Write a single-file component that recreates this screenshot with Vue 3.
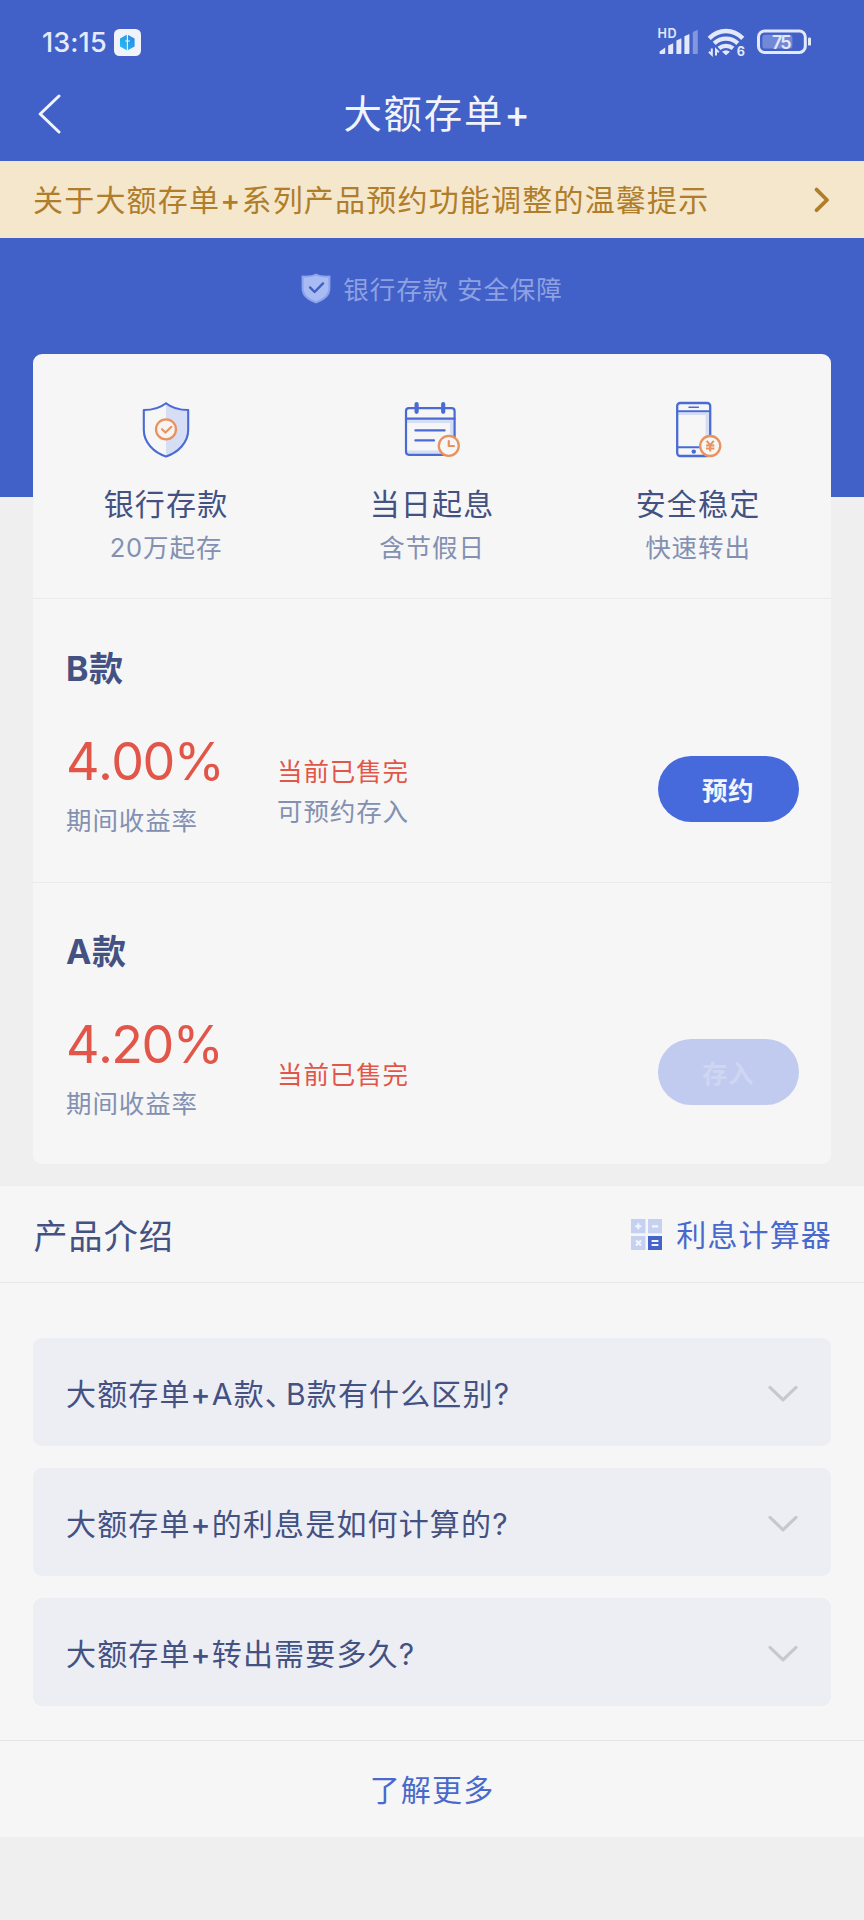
<script setup>
const products = [
  { name: 'B款', rate: '4.00%', status: '当前已售完', note: '可预约存入', action: '预约', disabled: false },
  { name: 'A款', rate: '4.20%', status: '当前已售完', note: '', action: '存入', disabled: true },
]

const questions = [
  '大额存单+A款、B款有什么区别?',
  '大额存单+的利息是如何计算的?',
  '大额存单+转出需要多久?',
]

// Splits out the marks that need their own weight or width.
const parts = (text) => text.split(/([+、])/)
const markClass = (part) => ({ plus: part === '+', comma: part === '、' })
</script>

<template>
  <div class="page">
    <header class="header">
      <div class="status">
        <span class="time">13:15</span>
        <svg class="app-icon" viewBox="0 0 27 27">
          <defs>
            <linearGradient id="hex" x1="1" y1="0" x2="0" y2="1">
              <stop offset="0" stop-color="#2f80e6" />
              <stop offset="1" stop-color="#22c4f2" />
            </linearGradient>
          </defs>
          <rect width="27" height="27" rx="5.5" fill="#f0f3fa" />
          <path d="M13.2 5.6 20.6 9.4V17.6L13.2 21.4 6 17.6V9.4Z" fill="url(#hex)" />
          <path d="M13.4 5v16.4M11 12h5" stroke="#f0f3fa" stroke-width="1.2" fill="none" />
        </svg>
        <svg class="status-icons" viewBox="656 26 156 32" fill="#e3e8fb">
          <text x="657.4" y="38.2" font-size="12.6" font-weight="600" textLength="19.2">HD</text>
          <path d="M659.6 54V51.6L665.2 47.6V53a1 1 0 0 1-1 1Z" />
          <path d="M668.2 54V45.4L673.2 43.2V53a1 1 0 0 1-1 1Z" />
          <path d="M676.4 54V40.4L681.4 38.2V53a1 1 0 0 1-1 1Z" />
          <path d="M684.4 54V36.2L689.4 34V53a1 1 0 0 1-1 1Z" />
          <path d="M692.8 54V32L697.8 29.8V53a1 1 0 0 1-1 1Z" opacity=".4" />
          <g fill="none" stroke="#e3e8fb" stroke-width="4.4">
            <path d="M709.2 38.4C719 28.6 733 28.6 742.8 38.4" />
            <path d="M714.2 43.4C721 37 731 37 737.8 43.4" />
            <path d="M719 48.4C723 45 729 45 733 48.4" />
          </g>
          <path d="M722 51.8Q726 48.6 730 51.8L726 55.2Z" />
          <path d="M711.8 48.5V54.6L709 51.8M716 55.5V49.6L718.8 52.2" fill="none" stroke="#e3e8fb" stroke-width="2" />
          <text x="736.8" y="55.8" font-size="12.6" font-weight="700">6</text>
          <rect x="758.5" y="31" width="46.8" height="21.4" rx="6" fill="none" stroke="#e3e8fb" stroke-width="3" />
          <rect x="762.4" y="34.8" width="30" height="13.8" rx="2.6" opacity=".3" />
          <rect x="808" y="37.6" width="3" height="8" rx="1.2" />
          <text x="772" y="49" font-size="18" font-weight="600" textLength="19.6">75</text>
        </svg>
      </div>
      <div class="nav">
        <svg class="back" viewBox="0 0 23 40">
          <path d="M21 2 2.2 20 21 38" />
        </svg>
        <h1>大额存单<span class="plus">+</span></h1>
      </div>
    </header>

    <div class="notice">
      <span class="notice-text">关于大额存单<span class="plus">+</span>系列产品预约功能调整的温馨提示</span>
      <svg class="notice-arrow" viewBox="0 0 16 26">
        <path d="M2.6 2.6 13 13 2.6 23.2" />
      </svg>
    </div>

    <section class="hero">
      <div class="slogan">
        <svg viewBox="0 0 30 31">
          <path d="M15 .6C18 2.6 24 2.8 29.4 2.6V15C29.4 23.6 23 27.6 15 30.4 7 27.6.6 23.6.6 15V2.6C6 2.8 12 2.6 15 .6Z" fill="#8ca4ee" />
          <path d="M15 2.6C19 4.2 23 4.6 27.4 4.6V15C27.4 21.8 22 25.6 15 28.2 8 25.6 2.6 21.8 2.6 15V4.6C7 4.6 11 4.2 15 2.6Z" fill="#a9bbf3" />
          <path d="M9 14.4 13.6 19 22 10.4" fill="none" stroke="#3f5fc2" stroke-width="2.4" stroke-linecap="round" stroke-linejoin="round" />
        </svg>
        <span>银行存款 安全保障</span>
      </div>
    </section>

    <main class="card">
      <div class="features">
        <div class="feature">
          <svg viewBox="0 0 60 58">
            <path d="M30 3.5C36 8.5 43 10 52 10V30C52 42 41 53 30 56Z" fill="#d6def6" />
            <path d="M30 3.2C24 8 17 10 7.8 10V30C7.8 42.5 18 52.6 30 56.4 42 52.6 52.2 42.5 52.2 30V10C43 10 36 8 30 3.2Z" fill="none" stroke="#4a6bd3" stroke-width="2.1" stroke-linejoin="round" />
            <circle cx="30" cy="29.3" r="10" fill="#f7f5f4" stroke="#e8935f" stroke-width="2.3" />
            <path d="M26 29.2 29.4 32.6 35.4 26.8" fill="none" stroke="#e8935f" stroke-width="2.1" stroke-linecap="round" />
          </svg>
          <strong>银行存款</strong>
          <span>20万起存</span>
        </div>
        <div class="feature">
          <svg viewBox="0 0 60 58">
            <path d="M5 19.5H52V54H48V23H5Z" fill="#d6def6" />
            <path d="M5 50.5H40V54H5Z" fill="#d6def6" />
            <rect x="4" y="8.2" width="48.6" height="46.6" rx="3" fill="none" stroke="#4a6bd3" stroke-width="2.2" />
            <path d="M4 18.6H52.6M13.4 30.4H42.6M13.4 40.4H32" fill="none" stroke="#4a6bd3" stroke-width="2.2" stroke-linecap="round" />
            <path d="M14.6 4V11.8M41.2 4V11.8" stroke="#4a6bd3" stroke-width="4.2" stroke-linecap="round" />
            <circle cx="46.8" cy="45.8" r="10" fill="#f6f6f6" stroke="#e8935f" stroke-width="2.3" />
            <path d="M46.8 41V46H52" fill="none" stroke="#e8935f" stroke-width="2.2" stroke-linecap="round" />
          </svg>
          <strong>当日起息</strong>
          <span>含节假日</span>
        </div>
        <div class="feature">
          <svg viewBox="0 0 60 58">
            <path d="M10 12.5H41V46H37.6V15H10Z" fill="#d6def6" />
            <rect x="9.2" y="3" width="33" height="53" rx="3" fill="none" stroke="#4a6bd3" stroke-width="2.3" />
            <path d="M9.2 11.2H42.2M9.2 47.2H42.2" stroke="#4a6bd3" stroke-width="2.1" />
            <path d="M21 7.2H30.4" stroke="#4a6bd3" stroke-width="1.5" stroke-linecap="round" />
            <circle cx="25.8" cy="51.6" r="2.2" fill="#4a6bd3" />
            <circle cx="42.2" cy="46" r="10" fill="#f6f6f6" stroke="#e8935f" stroke-width="2.3" />
            <path d="M38.6 40.8 42.2 45 45.8 40.8M42.2 45V51.4M38 45.4H46.4M38 48.6H46.4" fill="none" stroke="#e8935f" stroke-width="2" />
          </svg>
          <strong>安全稳定</strong>
          <span>快速转出</span>
        </div>
      </div>

      <article v-for="p in products" :key="p.name" class="product">
        <h2>{{ p.name }}</h2>
        <div class="offer">
          <div class="yield">
            <b>{{ p.rate }}</b>
            <span>期间收益率</span>
          </div>
          <div class="state">
            <em>{{ p.status }}</em>
            <span v-if="p.note">{{ p.note }}</span>
          </div>
          <button :class="{ disabled: p.disabled }">{{ p.action }}</button>
        </div>
      </article>
    </main>

    <section class="intro">
      <div class="intro-head">
        <h3>产品介绍</h3>
        <a class="calc">
          <svg viewBox="0 0 31 31">
            <path d="M0 0H14.4V14.2H0ZM17 0H31V14.2H17ZM0 17H14.4V31H0Z" fill="#c6d0f1" />
            <path d="M17 17H31V31H17Z" fill="#4463cb" />
            <path d="M4.2 7.2H10.4M7.3 4.2V10.2M21 7.4H27.2M5 21.4 10 26.6M10 21.4 5 26.6M20.6 22H27.4M20.6 26H27.4" stroke="#f3f5fc" stroke-width="2.1" />
          </svg>
          <span>利息计算器</span>
        </a>
      </div>
      <ul class="faq">
        <li v-for="q in questions" :key="q">
          <span><span v-for="(part, i) in parts(q)" :key="i" :class="markClass(part)">{{ part }}</span></span>
          <svg viewBox="0 0 30 18">
            <path d="M2 2.4 15 14.8 28 2.4" />
          </svg>
        </li>
      </ul>
      <a class="more">了解更多</a>
    </section>
  </div>
</template>

<style>
body {
  background: #efefef;
}
</style>

<style scoped>
.page {
  width: 864px;
  height: 1920px;
  overflow: hidden;
  background: #efefef;
  color: #435183;
  font-family: Inter, "Noto Sans CJK SC", sans-serif;
  font-size: 30px;
  letter-spacing: 1.15px;
}
h1, h2, h3, ul {
  margin: 0;
  padding: 0;
  font-weight: 400;
}
span, strong, b, em, a {
  white-space: nowrap;
}
svg {
  display: block;
  flex: none;
}
.plus {
  font-weight: 500;
}
.comma {
  margin-right: 5px;
  font-feature-settings: "halt";
}
.header {
  height: 161px;
  background: #4161c8;
}
.status {
  display: flex;
  align-items: center;
  height: 84px;
  padding: 0 52px 0 42px;
}
.time {
  width: 72px;
  color: #e6eafb;
  font-size: 27px;
  font-weight: 500;
  letter-spacing: 0.1px;
}
.app-icon {
  width: 27px;
  height: 27px;
}
.status-icons {
  width: 156px;
  height: 32px;
  margin-left: auto;
  letter-spacing: 0;
}
.nav {
  display: grid;
  grid-template-columns: 60px 1fr 60px;
  align-items: center;
  height: 58px;
}
.back {
  width: 23px;
  height: 40px;
  margin-left: 38px;
}
.back path {
  fill: none;
  stroke: #f2f4fc;
  stroke-width: 3;
  stroke-linecap: round;
  stroke-linejoin: round;
}
h1 {
  padding-left: 11px;
  color: #f2f4fc;
  font-size: 38.4px;
  line-height: 60px;
  letter-spacing: 1.8px;
  text-align: center;
}
.notice {
  display: flex;
  align-items: center;
  justify-content: space-between;
  height: 76.5px;
  padding: 0 34px 0 33px;
  background: #f5e7cc;
  color: #b07d2b;
}
.notice-text {
  padding-bottom: 2px;
  letter-spacing: 1.2px;
}
.notice-arrow {
  width: 16px;
  height: 26px;
  margin-top: 2px;
}
.notice-arrow path {
  fill: none;
  stroke: #b07d2b;
  stroke-width: 3.8;
  stroke-linecap: round;
  stroke-linejoin: round;
}
.hero {
  height: 259.5px;
  background: #4161c8;
}
.slogan {
  display: flex;
  justify-content: center;
  align-items: center;
  gap: 12px;
  height: 102px;
  color: #8fa1e1;
  font-size: 25.5px;
  letter-spacing: 0.9px;
}
.slogan span {
  padding-bottom: 2px;
}
.slogan svg {
  width: 30px;
  height: 31px;
}
.card {
  position: relative;
  width: 798px;
  height: 810px;
  margin: -143px auto 0;
  border-radius: 9px;
  background: #f6f6f6;
}
.features {
  display: grid;
  grid-template-columns: repeat(3, 1fr);
  height: 244px;
  border-bottom: 1px solid #ebebeb;
}
.feature {
  display: flex;
  flex-direction: column;
  align-items: center;
  padding-top: 46px;
}
.feature svg {
  width: 60px;
  height: 58px;
}
.feature strong {
  height: 48px;
  margin-top: 22px;
  font-weight: 400;
  line-height: 48px;
}
.feature span,
.yield span,
.state {
  color: #8390b1;
  font-size: 25.5px;
  line-height: 40px;
  letter-spacing: 0.9px;
}
.product {
  height: 283px;
  padding: 0 32.5px 0 33px;
}
.product + .product {
  box-shadow: inset 0 1px #ebebeb;
}
h2 {
  padding-top: 46px;
  font-size: 34px;
  font-weight: 700;
  line-height: 48px;
  letter-spacing: 0.6px;
}
.offer {
  display: flex;
  align-items: center;
  height: 118px;
  margin-top: 37px;
}
.yield {
  display: flex;
  flex-direction: column;
  width: 211px;
  padding-bottom: 7px;
}
.yield b {
  height: 70px;
  color: #e2564a;
  font-size: 52px;
  font-weight: 400;
  line-height: 62px;
  letter-spacing: -1.6px;
  font-kerning: none;
}
.state {
  display: flex;
  flex-direction: column;
  padding-top: 6px;
}
.state em {
  color: #e2564a;
  font-style: normal;
}
button {
  width: 141px;
  height: 66px;
  margin-left: auto;
  padding: 0 0 2px;
  border: 0;
  border-radius: 33px;
  background: #4669dc;
  color: #f3f5fd;
  font: inherit;
  font-size: 25.5px;
  font-weight: 700;
  letter-spacing: 0.6px;
}
button.disabled {
  background: #c0cbef;
  color: #ced6f2;
}
.intro {
  height: 651px;
  margin-top: 22px;
  background: #f6f6f6;
}
.intro-head {
  display: flex;
  align-items: center;
  justify-content: space-between;
  box-sizing: border-box;
  height: 97px;
  padding: 0 32px 0 33.5px;
  border-bottom: 1px solid #e8e8e8;
}
h3 {
  font-size: 34px;
  letter-spacing: 1.1px;
}
.calc {
  display: flex;
  align-items: center;
  gap: 14px;
  color: #4a69cc;
}
.calc span {
  padding-bottom: 2px;
}
.calc svg {
  width: 31px;
  height: 31px;
}
.faq {
  display: flex;
  flex-direction: column;
  gap: 22.5px;
  padding: 55px 33px 34px;
  list-style: none;
}
.faq li {
  display: flex;
  align-items: center;
  justify-content: space-between;
  height: 107.7px;
  padding: 0 33px;
  border-radius: 9px;
  background: #edeef4;
}
.faq svg {
  width: 30px;
  height: 18px;
  margin-top: 4px;
}
.faq path {
  fill: none;
  stroke: #c7c8cc;
  stroke-width: 3.2;
  stroke-linecap: round;
  stroke-linejoin: round;
}
.more {
  display: block;
  border-top: 1px solid #e5e5e5;
  color: #4a69cc;
  line-height: 99px;
  text-align: center;
}
</style>
